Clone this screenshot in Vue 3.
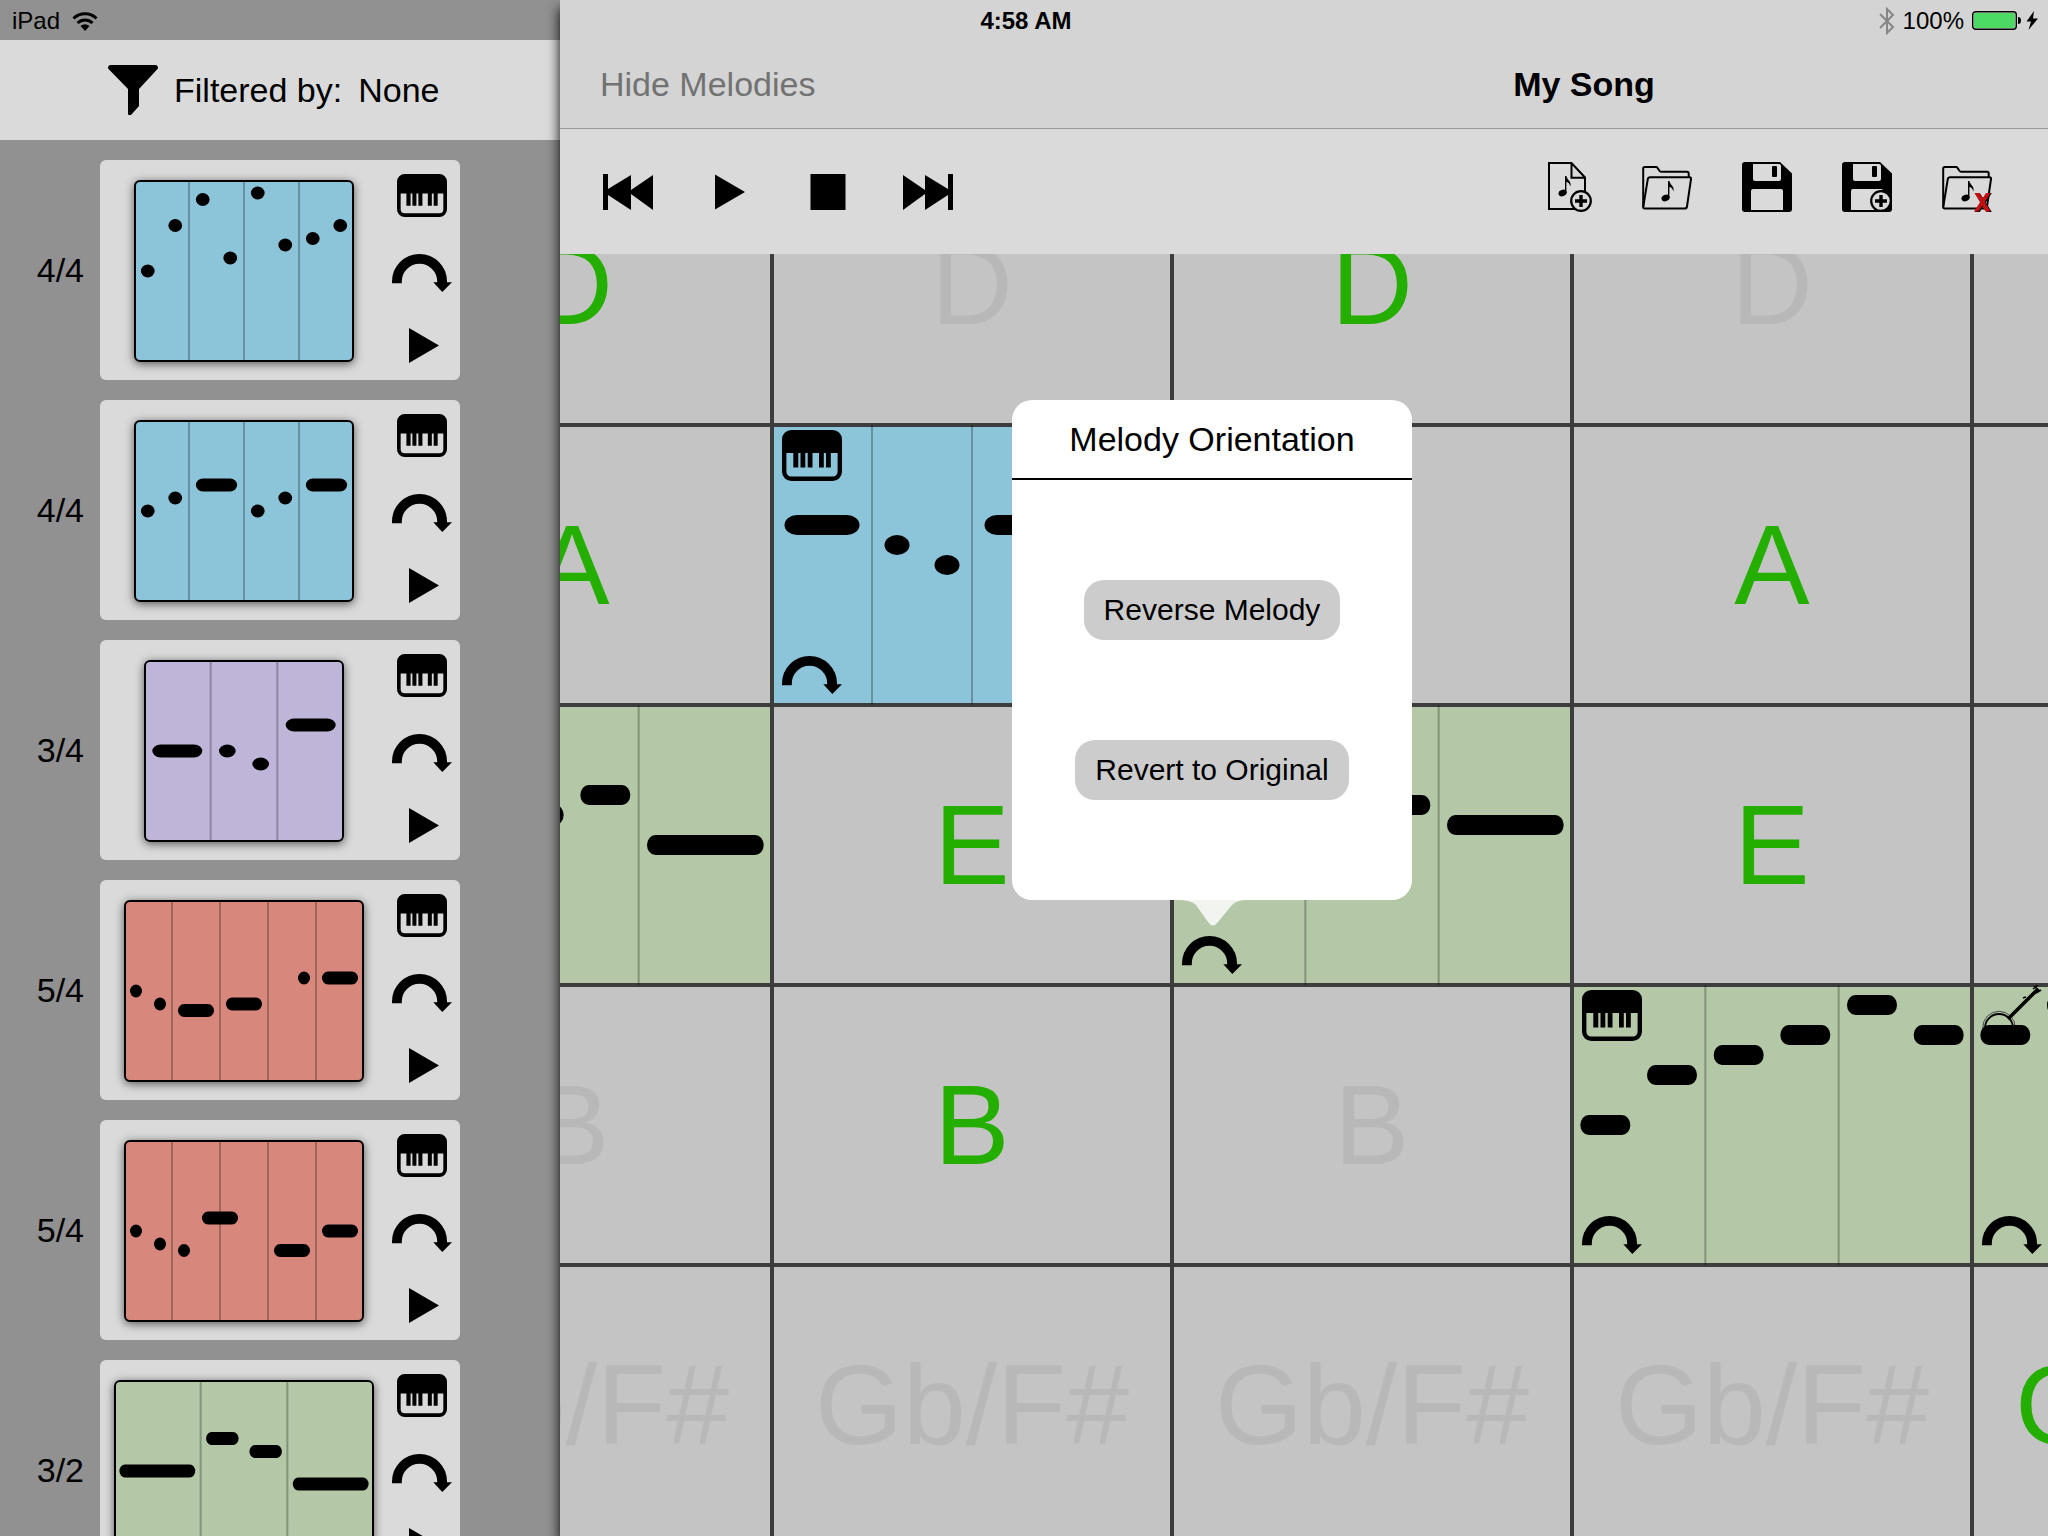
<script setup>
import { ref } from 'vue'

// A note is [start, length, row]: start and length in eighths, row out of 28 pitch steps.
const melodies = [
  { sig: '4/4', color: 'blue', beats: 4, units: 8, width: 220, notes: [[0, 1, 14], [1, 1, 7], [2, 1, 3], [3, 1, 12], [4, 1, 2], [5, 1, 10], [6, 1, 9], [7, 1, 7]] },
  { sig: '4/4', color: 'blue', beats: 4, units: 8, width: 220, notes: [[0, 1, 14], [1, 1, 12], [2, 2, 10], [4, 1, 14], [5, 1, 12], [6, 2, 10]] },
  { sig: '3/4', color: 'purple', beats: 3, units: 6, width: 200, notes: [[0, 2, 14], [2, 1, 14], [3, 1, 16], [4, 2, 10]] },
  { sig: '5/4', color: 'red', beats: 5, units: 10, width: 240, notes: [[0, 1, 14], [1, 1, 16], [2, 2, 17], [4, 2, 16], [7, 1, 12], [8, 2, 12]] },
  { sig: '5/4', color: 'red', beats: 5, units: 10, width: 240, notes: [[0, 1, 14], [1, 1, 16], [2, 1, 17], [3, 2, 12], [6, 2, 17], [8, 2, 14]] },
  { sig: '3/2', color: 'green', beats: 3, units: 12, width: 260, notes: [[0, 4, 14], [4, 2, 9], [6, 2, 11], [8, 4, 16]] }
]

const on = (text) => ({ text, active: true })
const off = (text) => ({ text, active: false })
const clip = (color, beats, units, notes, instrument = 'piano') => ({ melody: { color, beats, units, notes }, instrument })

const cells = [
  on('D'), off('D'), on('D'), off('D'), off('D'),
  on('A'), clip('blue', 4, 8, [[0, 2, 10], [2, 1, 12], [3, 1, 14], [4, 2, 10]]), on('A'), on('A'), off('A'),
  clip('green', 3, 12, [[0, 4, 14], [4, 2, 11], [6, 2, 9], [8, 4, 14]]), on('E'), clip('green', 3, 12, [[4, 2, 9], [6, 2, 10], [8, 4, 12]]), on('E'), off('E'),
  off('B'), on('B'), off('B'), clip('green', 3, 12, [[0, 2, 14], [2, 2, 9], [4, 2, 7], [6, 2, 5], [8, 2, 2], [10, 2, 5]]), clip('green', 3, 12, [[0, 2, 5], [2, 2, 2]], 'banjo'),
  off('Gb/F#'), off('Gb/F#'), off('Gb/F#'), off('Gb/F#'), on('Gb/F#')
]

const filter = ref('None')
</script>

<template>
  <div class="app">
    <svg class="defs" aria-hidden="true">
      <symbol id="piano" viewBox="0 0 60 51" preserveAspectRatio="none">
        <rect x="2.2" y="2.2" width="55.6" height="46.6" rx="7" fill="none" stroke="#000" stroke-width="4.4" />
        <path d="M2 23V9q0-7 7-7h42q7 0 7 7v14zM11.3 22h5v15.6h-5zM18.5 22h4.8v15.6h-4.8zM25.7 22h4.8v15.6h-4.8zM37 22h4.8v15.6H37zM44 22h4.8v15.6H44z" />
      </symbol>
      <symbol id="turn" viewBox="0 0 60 38">
        <path d="M4.9 29.3v-1.8a22.6 22.6 0 0 1 45.2 0V30" fill="none" stroke="#000" stroke-width="9.8" />
        <path d="M41.3 28.3H60L50.3 38z" />
      </symbol>
      <symbol id="banjo" viewBox="0 0 60 60">
        <circle cx="17" cy="42.500" r="16.200" fill="none" stroke="#444" stroke-width="1" />
        <circle cx="17" cy="43" r="14" fill="none" stroke="#000" stroke-width="1.8" />
        <path d="M26 34L56 4" stroke="#000" stroke-width="3.6" />
        <path d="M51 4l5-4M54 8l5-3M52 1l6 5M41 13l3-1" stroke="#000" stroke-width="1.6" fill="none" />
      </symbol>
      <symbol id="play" viewBox="0 0 34 35"><path d="M4 0l30 17.5L4 35z" /></symbol>
      <symbol id="plus" viewBox="0 0 22 22">
        <circle cx="11" cy="11" r="9.8" fill="#dadada" stroke="#000" stroke-width="2.2" />
        <path d="M11 5v12M5 11h12" stroke="#000" stroke-width="3.4" />
      </symbol>
      <symbol id="note" viewBox="0 0 14 22">
        <ellipse cx="4.6" cy="17" rx="4.2" ry="3.200" transform="rotate(-20 4.6 17)" />
        <path d="M7 0h1.400c.6 4 5.400 5 4 10.500-.8-3.300-2.600-4.300-4-4.500V17H7z" />
      </symbol>
      <symbol id="folder" viewBox="0 0 50 50">
        <g fill="none" stroke="#000" stroke-width="2" stroke-linejoin="round">
          <path d="M1.200 45V6.500Q1.200 5 2.800 5H14q1 0 1.600 1l2 3q.5.700 1.500.700h26q1.600 0 1.600 1.500v4" />
          <path d="M8.200 15.200H47.500q1.800 0 1.500 1.800l-4 27.500q-.3 2-2.200 2H2.800q-1.800 0-1.500-1.800L5.800 17q.3-1.800 2.400-1.800z" />
        </g>
        <use href="#note" x="19" y="19" width="14" height="22" />
      </symbol>
      <symbol id="disk" viewBox="0 0 50 50">
        <path d="M3 0h35l12 11.500V47q0 3-3 3H3q-3 0-3-3V3q0-3 3-3z" />
        <path d="M11 2h26q2 0 2 2v13q0 2-2 2H13q-2 0-2-2zM9 29q0-2 2-2h28q2 0 2 2v19H9z" fill="#dadada" />
        <rect x="30" y="4" width="5" height="11" rx="1" />
      </symbol>
    </svg>

    <aside class="sidebar">
      <header class="filter">
        <svg class="funnel" viewBox="0 0 50 50"><path d="M2 0h46q3 1.500 1.500 4L31 24v17l-7.500 8.500q-2 1-3.500 0V24L.5 4Q-1 1.500 2 0z" /></svg>
        <span id="filter-label">Filtered by:</span>
        <button class="plain" aria-labelledby="filter-label">{{ filter }}</button>
      </header>
      <ul class="melodies">
        <li v-for="(m, i) in melodies" :key="i" class="melody">
          <span class="sig">{{ m.sig }}</span>
          <div class="card">
            <div class="stage">
              <svg class="roll framed" :class="m.color" :style="{ width: m.width + 'px' }" :viewBox="`0 0 ${m.units} 28`" preserveAspectRatio="none">
                <line v-for="b in m.beats - 1" :key="b" class="beat" :x1="b * m.units / m.beats" :x2="b * m.units / m.beats" y1="0" y2="28" />
                <rect v-for="(n, k) in m.notes" :key="'n' + k" :x="n[0] + 0.25" :y="n[2] - 1" :width="n[1] - 0.5" height="2" rx="0.25" ry="1" />
              </svg>
            </div>
            <div class="tools">
              <button class="plain" aria-label="Instrument"><svg width="50" height="43"><use href="#piano" /></svg></button>
              <button class="plain" aria-label="Orientation"><svg width="60" height="38"><use href="#turn" /></svg></button>
              <button class="plain" aria-label="Play melody"><svg width="34" height="35"><use href="#play" /></svg></button>
            </div>
          </div>
        </li>
      </ul>
    </aside>

    <main class="song">
      <header class="nav">
        <button class="plain hide">Hide Melodies</button>
        <h1>My Song</h1>
      </header>

      <div class="toolbar">
        <div class="group">
          <button class="plain" aria-label="Rewind"><svg viewBox="0 0 50 36" height="36"><path d="M0 0h5v15L28 1v15L50 1v35L28 20v16L5 21v15H0z" /></svg></button>
          <button class="plain" aria-label="Play"><svg viewBox="0 0 50 36" height="36"><path d="M12 .5l30 17.500-30 17.500z" /></svg></button>
          <button class="plain" aria-label="Stop"><svg viewBox="0 0 50 36" height="36"><path d="M7.500 0h35v36h-35z" /></svg></button>
          <button class="plain" aria-label="Fast forward"><svg viewBox="0 0 50 36" height="36"><path d="M50 0h-5v15L22 1v15L0 1v35l22-16v16l23-15v15h5z" /></svg></button>
        </div>
        <div class="group files">
          <button class="plain" aria-label="New song">
            <svg viewBox="0 0 50 50" height="50">
              <path d="M7 1h22.500L43 15.500V47H7zM29.500 1v14.800H43" fill="none" stroke="#000" stroke-width="2" />
              <use href="#note" x="16" y="14" width="14" height="22" />
              <use href="#plus" x="28" y="28" width="22" height="22" />
            </svg>
          </button>
          <button class="plain" aria-label="Open song"><svg width="50" height="50"><use href="#folder" /></svg></button>
          <button class="plain" aria-label="Save"><svg width="50" height="50"><use href="#disk" /></svg></button>
          <button class="plain" aria-label="Save as">
            <svg viewBox="0 0 50 50" height="50"><use href="#disk" width="50" height="50" /><use href="#plus" x="28" y="28" width="22" height="22" /></svg>
          </button>
          <button class="plain" aria-label="Delete song">
            <svg viewBox="0 0 50 50" height="50">
              <use href="#folder" width="50" height="50" />
              <path d="M32 31h5l12 19h-5zM44 31h5L37 50h-5z" transform="translate(.8 0)" />
              <path d="M32.500 31h5l11 18.500h-5zM44 31h4.500l-12 18.500h-4.500z" fill="#c01212" />
            </svg>
          </button>
        </div>
      </div>

      <section class="viewport">
        <div class="grid">
          <div v-for="(c, i) in cells" :key="i" class="cell" :class="c.melody ? c.melody.color : { active: c.active }">
            <template v-if="c.melody">
              <div class="clip">
                <button class="plain" aria-label="Instrument">
                  <svg v-if="c.instrument === 'piano'" width="60" height="51"><use href="#piano" /></svg>
                  <svg v-else width="60" height="60"><use href="#banjo" /></svg>
                </button>
                <button class="plain" aria-label="Orientation"><svg width="60" height="38"><use href="#turn" /></svg></button>
              </div>
              <svg class="roll overlay" :viewBox="`0 0 ${c.melody.units} 28`" preserveAspectRatio="none">
                <line v-for="b in c.melody.beats - 1" :key="b" class="beat" :x1="b * c.melody.units / c.melody.beats" :x2="b * c.melody.units / c.melody.beats" y1="0" y2="28" />
                <rect v-for="(n, k) in c.melody.notes" :key="'n' + k" :x="n[0] + 0.25" :y="n[2] - 1" :width="n[1] - 0.5" height="2" rx="0.25" ry="1" />
              </svg>
            </template>
            <template v-else>{{ c.text }}</template>
          </div>
        </div>

        <div class="popover" role="dialog" aria-labelledby="popover-title">
          <h2 id="popover-title">Melody Orientation</h2>
          <div class="choices">
            <button>Reverse Melody</button>
            <button>Revert to Original</button>
          </div>
          <svg class="tail" viewBox="0 0 70 26"><path d="M0 0h70q-10 0-15 5L41 22q-5 7-10 0L19 5Q14 0 0 0z" fill="#f2f4ef" /></svg>
        </div>
      </section>
    </main>

    <div class="status">
      <div class="carrier">
        <span>iPad</span>
        <svg width="26" height="19" viewBox="0 0 26 19" fill="none" stroke="#000" stroke-width="3">
          <path d="M1.500 6.500a16.500 16.500 0 0 1 23 0M5.500 11a11 11 0 0 1 15 0" />
          <path d="M8.500 14q4.500-3.500 9 0L13 19z" fill="#000" stroke="none" />
        </svg>
      </div>
      <time>4:58 AM</time>
      <div class="power">
        <svg width="16" height="28" viewBox="0 0 16 28" fill="none" stroke="#868686" stroke-width="2"><path d="M1 7l13 13-6 6V2l6 6L1 21" /></svg>
        <span>100%</span>
        <svg width="68" height="20" viewBox="0 0 68 20">
          <rect x=".7" y=".7" width="43.600" height="17.600" rx="3" fill="none" stroke="#000" stroke-width="1.400" />
          <rect x="2" y="2" width="41" height="15" rx="1.500" fill="#4cd964" />
          <path d="M46 6q3 0 3 3.500T46 13zM62 0l-7.500 10.500H59L56.500 19 66 7.500h-5z" />
        </svg>
      </div>
    </div>
  </div>
</template>

<style>
body {
  margin: 0;
  overflow: hidden;
}
</style>

<style scoped>
.app {
  position: relative;
  display: flex;
  height: 100vh;
  overflow: hidden;
  background: #919191;
  color: #000;
  font-family: "Liberation Sans", Arial, sans-serif;
  font-size: 34px;
  line-height: 40px;
}

.defs {
  position: absolute;
  width: 0;
  height: 0;
}

svg {
  display: block;
}

button {
  border: 0;
  font: inherit;
  color: inherit;
}

.plain {
  padding: 0;
  background: none;
}

.blue { background: #8cc4d9; }
.purple { background: #bfb5d9; }
.red { background: #d8877c; }
.green { background: #b4c7a6; }

/* Status bar */
.status {
  position: absolute;
  inset: 0 0 auto;
  display: grid;
  grid-template-columns: 1fr auto 1fr;
  align-items: center;
  height: 42px;
  padding: 0 8px 0 12px;
  font-size: 24px;
  line-height: 28px;
}

.carrier,
.power {
  display: flex;
  align-items: center;
  gap: 12px;
}

.power {
  gap: 8px;
  justify-content: flex-end;
}

time {
  font-weight: bold;
}

/* Sidebar */
.sidebar {
  flex: none;
  width: 560px;
  padding-top: 40px;
  box-sizing: border-box;
}

.filter {
  display: flex;
  align-items: center;
  gap: 16px;
  height: 100px;
  padding-left: 108px;
  background: #dadada;
}

.funnel {
  width: 50px;
  height: 50px;
}

.melodies {
  display: flex;
  flex-direction: column;
  gap: 20px;
  margin: 0;
  padding: 20px 0;
  list-style: none;
}

.melody {
  display: flex;
  align-items: center;
}

.sig {
  width: 84px;
  margin-right: 16px;
  text-align: right;
}

.card {
  display: flex;
  width: 360px;
  height: 220px;
  padding-right: 4px;
  box-sizing: border-box;
  border-radius: 6px;
  background: #dadada;
}

.stage {
  display: flex;
  justify-content: center;
  width: 288px;
  padding-top: 20px;
}

.framed {
  height: 182px;
  border-radius: 6px;
  box-shadow: 0 2px 10px rgba(0, 0, 0, 0.6);
  outline: 2px solid #000;
  outline-offset: -2px;
}

.beat {
  stroke: rgba(0, 0, 0, 0.26);
  stroke-width: 2px;
  vector-effect: non-scaling-stroke;
}

.tools {
  flex: 1;
  display: flex;
  flex-direction: column;
  align-items: center;
  justify-content: space-between;
  padding: 14px 0 17px;
}

/* Song area */
.song {
  flex: 1;
  min-width: 0;
  display: flex;
  flex-direction: column;
  background: #dadada;
  box-shadow: 0 8px 12px #000;
}

.nav {
  position: relative;
  display: grid;
  grid-template-columns: 1fr auto 1fr;
  align-items: center;
  width: 100vw;
  height: 129px;
  padding: 40px 40px 0;
  box-sizing: border-box;
  border-bottom: 1px solid #999;
  background: #d4d4d4;
}

.nav,
.toolbar {
  flex: none;
}

.hide {
  justify-self: start;
  color: #727272;
}

h1,
h2 {
  margin: 0;
  font-size: 34px;
  line-height: 40px;
}

.toolbar {
  display: flex;
  justify-content: space-between;
  align-items: center;
  height: 125px;
  padding: 0 56px 0 43px;
  box-sizing: border-box;
}

.group {
  display: flex;
  gap: 50px;
}

.group svg {
  width: 50px;
}

.files {
  padding-bottom: 9px;
}

.viewport {
  position: relative;
  flex: 1;
  min-height: 0;
  overflow: hidden;
  background: #c4c4c4;
}

/* The grid is scrolled part of a cell to the right and down */
.grid {
  display: grid;
  grid-template-columns: repeat(5, 396px);
  grid-auto-rows: 276px;
  gap: 4px;
  width: max-content;
  margin: -107px 0 0 -186px;
  background: #3d3d3d;
}

.cell {
  position: relative;
  display: flex;
  align-items: center;
  justify-content: center;
  font-size: 113px;
  line-height: 128px;
  color: #b8b8b8;
}

.cell:not(.blue):not(.green) {
  background: #c4c4c4;
}

.active {
  color: #24ae00;
}

.clip {
  align-self: stretch;
  flex: 1;
  display: flex;
  flex-direction: column;
  justify-content: space-between;
  align-items: flex-start;
  padding-left: 8px;
  margin: -2px 0;
}

.clip button {
  display: flex;
  align-items: center;
  height: 60px;
}

.overlay {
  position: absolute;
  top: -2px;
  left: -2px;
  width: 400px;
  height: 280px;
  pointer-events: none;
}

/* Popover */
.popover {
  position: absolute;
  top: 146px;
  left: 452px;
  width: 400px;
  border-radius: 20px;
  background: #fff;
}

h2 {
  padding: 19px 0;
  border-bottom: 2px solid #000;
  font-weight: normal;
  text-align: center;
}

.choices {
  display: flex;
  flex-direction: column;
  align-items: center;
  gap: 100px;
  padding: 100px 0;
}

.choices button {
  height: 60px;
  padding: 0 20px;
  border-radius: 20px;
  background: #ccc;
  font-size: 30px;
}

.tail {
  position: absolute;
  top: 100%;
  left: 165px;
  width: 70px;
  height: 26px;
}
</style>
